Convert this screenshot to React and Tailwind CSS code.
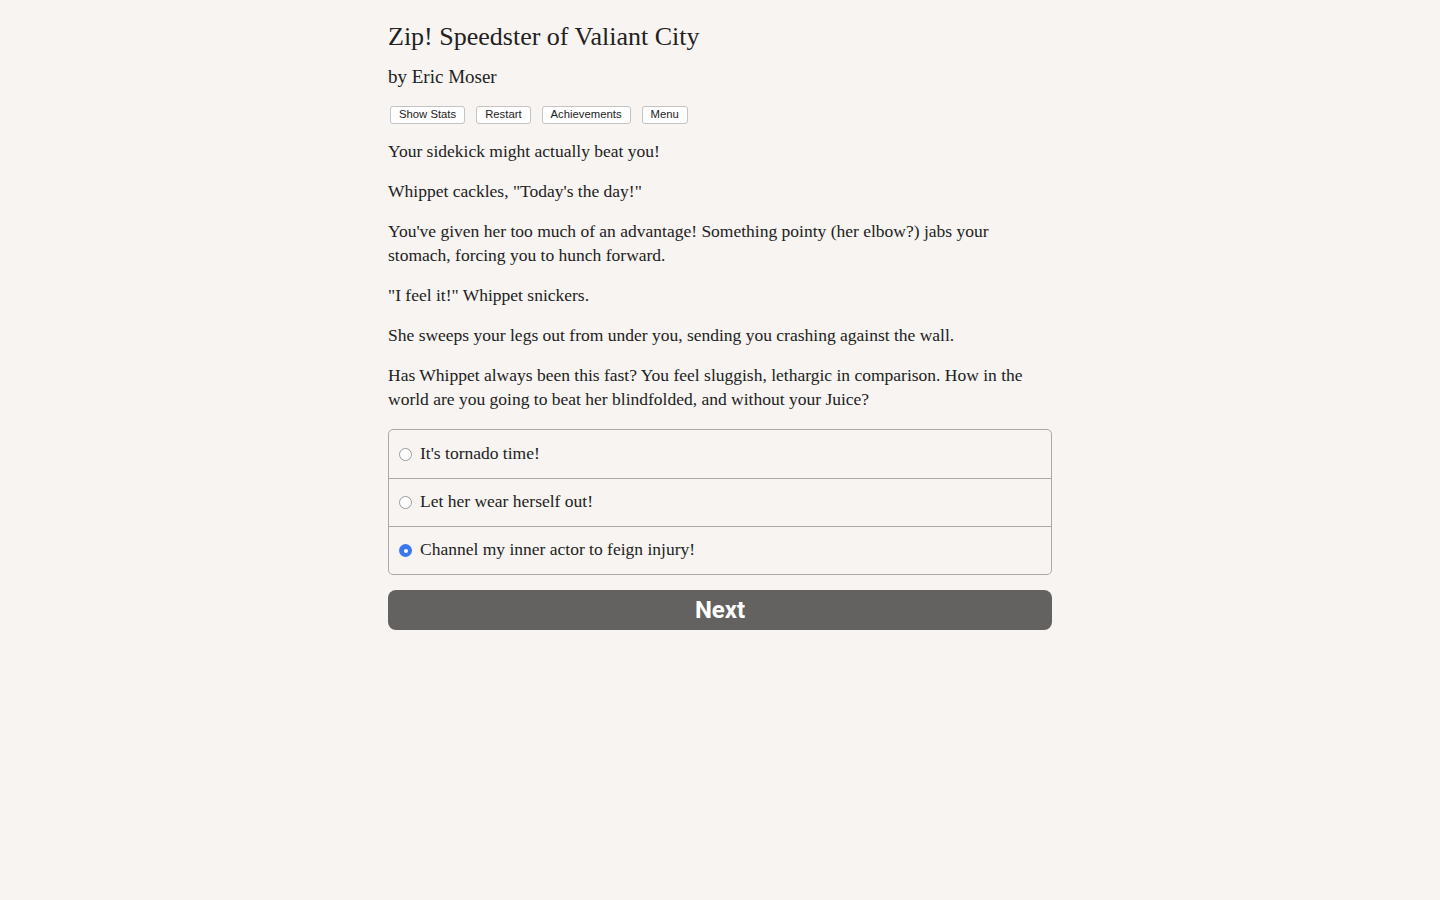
import React, { useState } from "react";

const OPTIONS = [
  "It's tornado time!",
  "Let her wear herself out!",
  "Channel my inner actor to feign injury!",
];

const PARAGRAPHS = [
  "Your sidekick might actually beat you!",
  'Whippet cackles, "Today\'s the day!"',
  "You've given her too much of an advantage! Something pointy (her elbow?) jabs your stomach, forcing you to hunch forward.",
  '"I feel it!" Whippet snickers.',
  "She sweeps your legs out from under you, sending you crashing against the wall.",
  "Has Whippet always been this fast? You feel sluggish, lethargic in comparison. How in the world are you going to beat her blindfolded, and without your Juice?",
];

export default function App() {
  const [choice, setChoice] = useState(2);
  const btn =
    "h-[18px] px-[8px] bg-white border border-[#c4c4c4] rounded-[3px] text-[11.3px] leading-none text-[#222] font-['Liberation_Sans',sans-serif]";

  return (
    <div className="min-h-[900px] bg-[#f7f4f1] text-[#222] font-['Liberation_Serif',serif]">
      <div className="w-[664px] mx-auto pt-[21px]">
        <h1 className="text-[26px] leading-[32px] text-[#222]">Zip! Speedster of Valiant City</h1>
        <h2 className="text-[19px] leading-[24px] mt-[12px]">by Eric Moser</h2>
        <div className="flex gap-[11px] mt-[17px] ml-[2px]">
          <button className={btn}>Show Stats</button>
          <button className={btn}>Restart</button>
          <button className={btn}>Achievements</button>
          <button className={btn}>Menu</button>
        </div>
        <div className="mt-[15px] flex flex-col gap-[16px] text-[17.5px] leading-[24px]">
          {PARAGRAPHS.map((p) => (
            <p key={p}>{p}</p>
          ))}
        </div>
        <div className="mt-[18px] border border-[#a9a9a9] rounded-[5px] overflow-hidden">
          {OPTIONS.map((o, i) => (
            <label
              key={o}
              onClick={() => setChoice(i)}
              className={`flex items-center h-[48px] pl-[10px] text-[17.5px] cursor-pointer ${
                i > 0 ? "border-t border-[#a9a9a9]" : ""
              }`}
            >
              {choice === i ? (
                <span className="w-[13px] h-[13px] rounded-full bg-[#3b78f0] flex items-center justify-center mr-[8px]">
                  <span className="w-[4px] h-[4px] rounded-full bg-white" />
                </span>
              ) : (
                <span className="w-[13px] h-[13px] rounded-full bg-white border border-[#9a9a9a] mr-[8px]" />
              )}
              <span className="-mt-[2px]">{o}</span>
            </label>
          ))}
        </div>
        <button className="mt-[15px] w-full h-[40px] rounded-[8px] bg-[#636260] text-white text-[24px] font-bold font-['Roboto',sans-serif]">
          Next
        </button>
      </div>
    </div>
  );
}
